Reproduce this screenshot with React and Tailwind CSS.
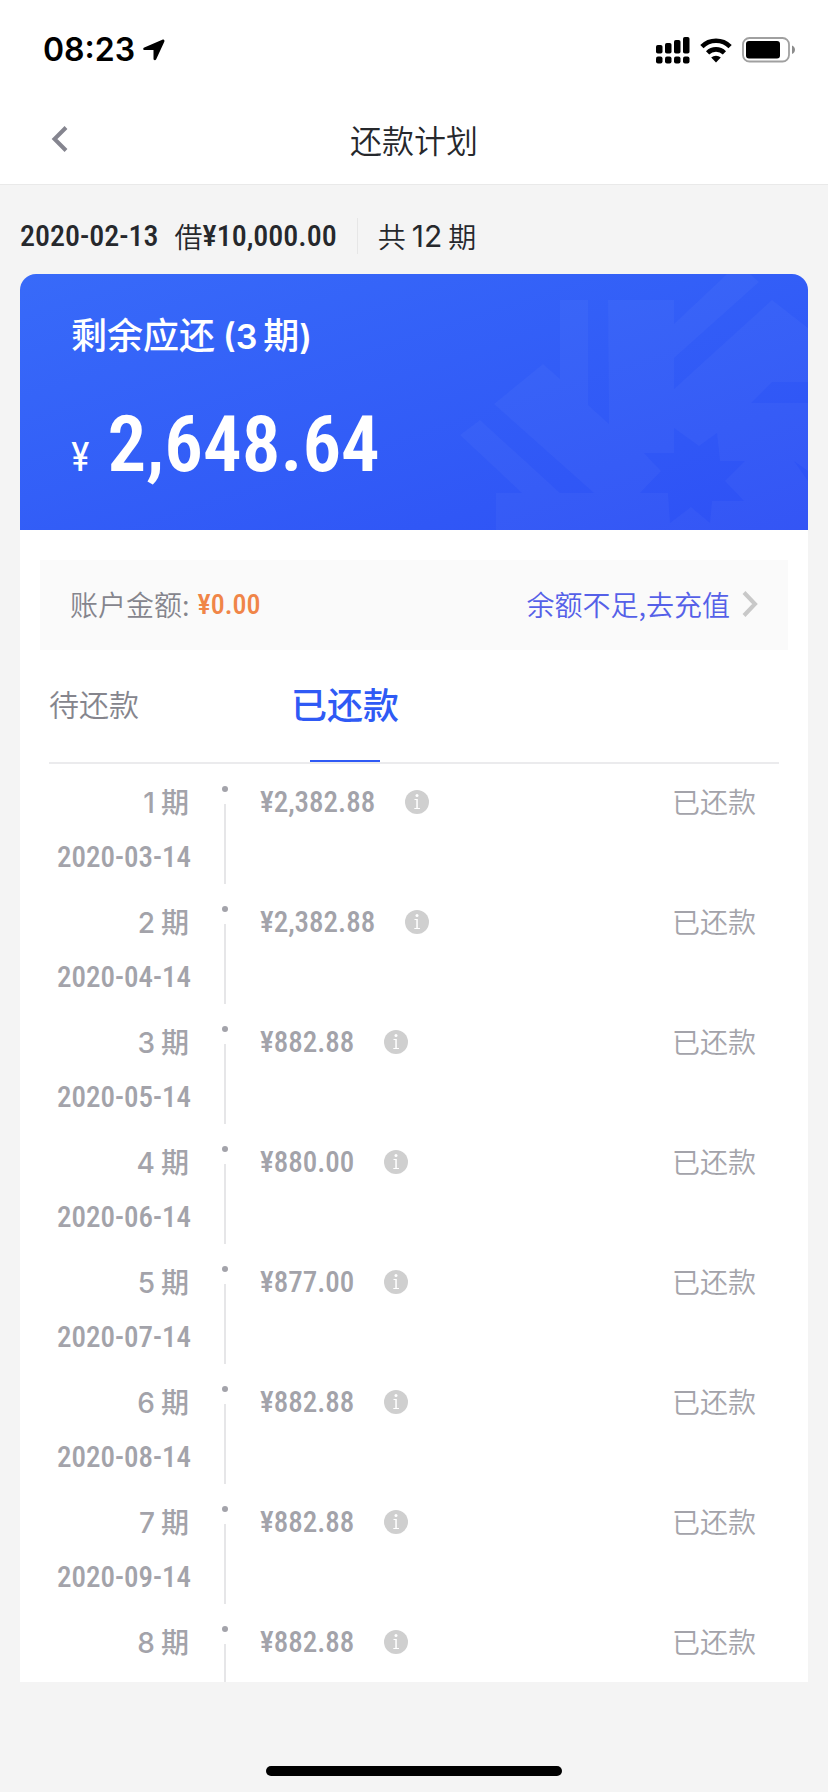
import { useState } from "react";

const plan = [
  { term: 1, date: "2020-03-14", amount: "2,382.88" },
  { term: 2, date: "2020-04-14", amount: "2,382.88" },
  { term: 3, date: "2020-05-14", amount: "882.88" },
  { term: 4, date: "2020-06-14", amount: "880.00" },
  { term: 5, date: "2020-07-14", amount: "877.00" },
  { term: 6, date: "2020-08-14", amount: "882.88" },
  { term: 7, date: "2020-09-14", amount: "882.88" },
  { term: 8, date: "", amount: "882.88" },
];

function StatusBar() {
  return (
    <div className="flex h-[98px] shrink-0 items-center justify-between pt-[2px] pl-[43px] pr-[33px] text-black">
      <div className="flex items-center gap-2">
        <span className="font-['Inter',sans-serif] text-[32px] leading-10 font-semibold">08:23</span>
        <svg width="22" height="22" viewBox="0 0 22 22" fill="currentColor">
          <path d="M19.300.7 1.300 8.600C-.4 9.400 0 11 1.700 11H10.500v8.800c0 1.700 2 2 2.700.5L21.300 2.700c.6-1.400-.6-2.600-2-2z" />
        </svg>
      </div>
      <div className="flex items-center gap-[10px]">
        <svg width="34" height="27" viewBox="0 0 34 27" fill="currentColor">
          <rect x="0" y="8" width="6.500" height="8.500" rx="1.800" />
          <rect x="9" y="6" width="6.500" height="10.500" rx="1.800" />
          <rect x="18" y="3" width="6.500" height="13.500" rx="1.800" />
          <rect x="27" y="0" width="6.500" height="16.500" rx="1.800" />
          <rect x="0" y="19.500" width="6.500" height="7" rx="2" />
          <rect x="9" y="19.500" width="6.500" height="7" rx="2" />
          <rect x="18" y="19.500" width="6.500" height="7" rx="2" />
          <rect x="27" y="19.500" width="6.500" height="7" rx="2" />
        </svg>
        <svg width="32" height="25" viewBox="0 0 32 25" fill="none" stroke="currentColor" strokeWidth="4.600">
          <path d="M1.900 8.600a20 20 0 0 1 28.200 0" />
          <path d="M7.600 14.800a12 12 0 0 1 16.800 0" />
          <path d="M11.200 19.600a7 7 0 0 1 9.600 0L16 24.500z" fill="currentColor" stroke="none" />
        </svg>
        <svg width="53" height="26" viewBox="0 0 53 26">
          <rect x="1" y="1" width="46" height="23.500" rx="6.500" fill="none" stroke="#a0a0a0" strokeWidth="1.800" />
          <rect x="4" y="4" width="34" height="17.500" rx="3" fill="#000" />
          <path d="M50 8.500c4 1.500 4 7 0 8.500z" fill="#8c8c8c" />
        </svg>
      </div>
    </div>
  );
}

function Header() {
  return (
    <header className="flex h-[87px] shrink-0 items-center border-b border-[#e9e9e9] px-[51px] pb-1">
      <button type="button" aria-label="返回" className="w-10 text-[#85858f]">
        <svg width="17" height="26" viewBox="0 0 17 26" fill="none" stroke="currentColor" strokeWidth="4">
          <path d="M15 1.500 3.500 13 15 24.500" />
        </svg>
      </button>
      <h1 className="flex-1 text-center text-[32px] leading-10 font-[350] text-[#26282c]">还款计划</h1>
      <div className="w-10" />
    </header>
  );
}

function BannerPattern() {
  return (
    <svg
      className="absolute top-0 right-0 h-full"
      width="394"
      height="256"
      viewBox="0 0 394 256"
      fill="#fff"
      fillOpacity=".03"
      aria-hidden="true"
    >
      <path
        fillRule="evenodd"
        d="M146 26h28v105l21 19-1-124h66v89l98-89 36 28v54h-36l-21 21h57v68l-14-10 14 20v49H82v-37h98L80 130l49-40 17 15z
           M260 154v25h-30l17 18-21 22h28l2 30 21-16 19 16 2-22h32l-19-20 20-20h-25l-3-28-18 13z"
      />
      <path d="m66 146-20 15 62 58h38zM313 0h23l9 8-85 76V50z" />
    </svg>
  );
}

function InfoIcon() {
  return (
    <svg width="24" height="24" viewBox="0 0 24 24">
      <circle cx="12" cy="12" r="12" fill="#cfcfcf" />
      <circle cx="12" cy="5.500" r="1.500" fill="#fff" />
      <path d="M9.500 9h3.300v9H15v1H9.300v-1h2v-8H9.500z" fill="#fff" />
    </svg>
  );
}

function PlanRow({ item }) {
  return (
    <li className="flex h-[120px] shrink-0 text-[#a3a3aa]">
      <div className="flex w-[142px] flex-col items-end pt-[17px]">
        <div className="flex items-baseline gap-[6px] pr-[2px] text-[28px] leading-10 font-medium">
          <span className="font-['Inter',sans-serif]">{item.term}</span>
          <span>期</span>
        </div>
        <time className="mt-[14px] font-['Roboto_Condensed',Roboto,sans-serif] text-[29px] leading-10 font-medium whitespace-nowrap">
          {item.date}
        </time>
      </div>
      <div className="ml-[31px] flex w-[6px] flex-col items-center pt-[22px]">
        <span className="size-[6px] shrink-0 rounded-full bg-[#a3a3aa]" />
        <span className="mt-3 h-20 w-[2px] shrink-0 bg-[#e6e6e8]" />
      </div>
      <div className="mt-[18px] ml-8 flex h-10 flex-1 items-center self-start pr-[23px]">
        <span className="font-['Roboto_Condensed',Roboto,sans-serif] text-[29px] leading-10 font-medium">
          ¥{item.amount}
        </span>
        <button type="button" aria-label="详情" className="ml-[30px]">
          <InfoIcon />
        </button>
        <span className="ml-auto pb-[2px] text-[28px] leading-10 font-[350]">已还款</span>
      </div>
    </li>
  );
}

export default function App() {
  const [tab, setTab] = useState("paid");

  return (
    <div className="flex h-screen flex-col bg-[#f4f4f4] font-['Noto_Sans_CJK_SC',sans-serif]">
      <div className="bg-white">
        <StatusBar />
        <Header />
      </div>

      <div className="flex h-[89px] shrink-0 items-center px-5 pt-3 text-[28px] leading-10 text-[#26282c]">
        <span className="font-['Roboto_Condensed',Roboto,sans-serif] text-[30px] font-medium">2020-02-13</span>
        <span className="ml-4 font-[350]">借</span>
        <span className="font-['Roboto_Condensed',Roboto,sans-serif] text-[30px] font-medium">¥10,000.00</span>
        <span className="mr-[20px] ml-[20px] h-9 w-px bg-[#e6e6e6]" />
        <span className="font-[350]">共</span>
        <span className="mx-[6px] font-['Inter',sans-serif] text-[30px]">12</span>
        <span className="font-[350]">期</span>
      </div>

      <main className="mx-5 flex min-h-0 flex-1 flex-col overflow-hidden rounded-t-2xl bg-white">
        <section className="relative h-[256px] shrink-0 bg-linear-to-br from-[#386af9] to-[#2e50f5] pl-[51px] text-white">
          <BannerPattern />
          <h2 className="flex items-baseline pt-[33px] text-[36px] leading-[52px] font-medium">
            <span>剩余应还</span>
            <span className="ml-2 font-['Inter',sans-serif] text-[34px] font-semibold">(3</span>
            <span className="ml-[6px]">期</span>
            <span className="font-['Inter',sans-serif] text-[34px] font-semibold">)</span>
          </h2>
          <p className="mt-9 flex items-baseline gap-[18px] font-['Roboto_Condensed',Roboto,sans-serif] leading-[92px]">
            <span className="text-[40px]">¥</span>
            <span className="text-[77px] font-semibold">2,648.64</span>
          </p>
        </section>

        <section className="mx-5 mt-[30px] flex h-[90px] shrink-0 items-center bg-[#fafafa] px-[30px] text-[28px] leading-10">
          <span className="pb-[2px] font-[350] text-[#85858d]">账户金额:</span>
          <span className="ml-2 font-['Roboto_Condensed',Roboto,sans-serif] font-medium text-[#f08548]">¥0.00</span>
          <a href="#recharge" className="ml-auto flex items-center gap-3 pb-[2px] font-[350] text-[#5560e8]">
            余额不足,去充值
            <svg width="16" height="26" viewBox="0 0 16 26" fill="none" stroke="#c8c8c8" strokeWidth="4">
              <path d="M2 1.500 13 13 2 24.500" />
            </svg>
          </a>
        </section>

        <nav className="mx-[29px] flex h-[114px] shrink-0 border-b-2 border-[#ebebed]">
          <button
            type="button"
            onClick={() => setTab("pending")}
            className={
              tab === "pending"
                ? "relative w-[190px] pb-[6px] text-left text-[36px] font-medium text-[#2f5af5]"
                : "w-[190px] pb-[6px] text-left text-[30px] font-[350] text-[#85858d]"
            }
          >
            待还款
          </button>
          <button
            type="button"
            onClick={() => setTab("paid")}
            className={
              tab === "paid"
                ? "relative w-[212px] pb-[6px] text-center text-[36px] font-medium text-[#2f5af5]"
                : "w-[212px] pb-[6px] text-center text-[30px] font-[350] text-[#85858d]"
            }
          >
            已还款
            {tab === "paid" && (
              <span className="absolute bottom-0 left-1/2 h-[2px] w-[70px] -translate-x-1/2 bg-[#2f5af5]" />
            )}
          </button>
        </nav>

        <ul className="mx-[29px] flex min-h-0 flex-1 flex-col overflow-hidden">
          {plan.map((item) => (
            <PlanRow key={item.term} item={item} />
          ))}
        </ul>
      </main>

      <footer className="flex h-[110px] shrink-0 items-end justify-center pb-4">
        <div className="h-[10px] w-[296px] rounded-full bg-black" />
      </footer>
    </div>
  );
}
